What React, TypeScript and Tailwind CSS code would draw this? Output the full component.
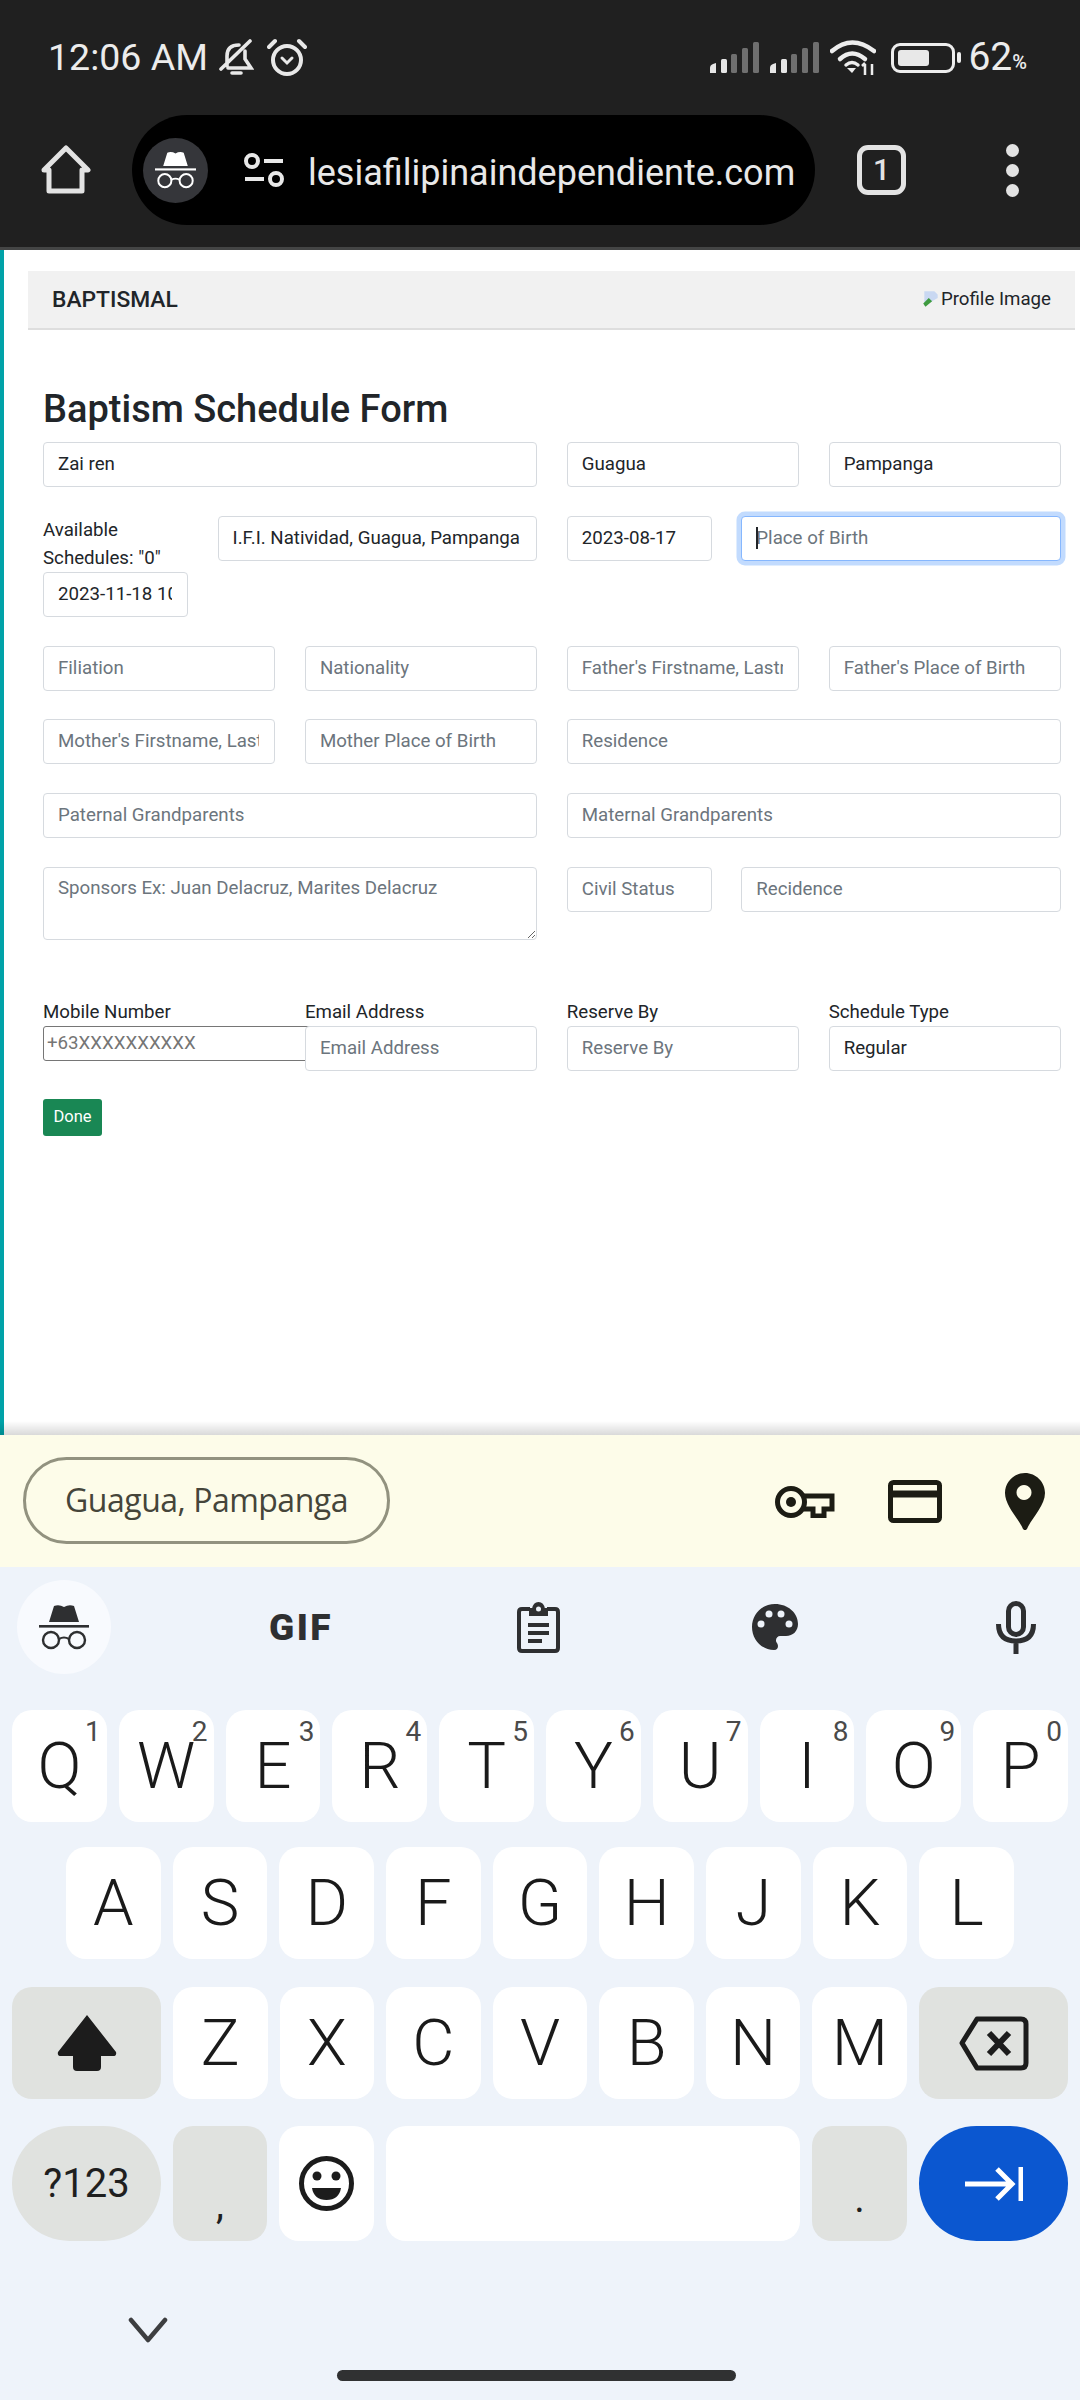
import React from 'react';

const inputBase =
  'w-full h-[45px] rounded-[4px] border border-[#d6dadf] bg-white pl-[14px] pr-[15px] pb-[2px] text-[18.7px] text-[#212529] outline-none placeholder:text-[#6c757d]';

interface FieldProps {
  className: string;
  value?: string;
  placeholder?: string;
}

const Field: React.FC<FieldProps> = ({ className, value, placeholder }) => (
  <div className={className}>
    <input readOnly className={inputBase} defaultValue={value} placeholder={placeholder} />
  </div>
);

const Incognito: React.FC<{ className: string; color: string }> = ({ className, color }) => (
  <svg viewBox="0 0 50 46" className={className} fill="none">
    <path d="M10 18 L15 2 Q20 0 25 3 Q30 0 35 2 L40 18 Z" fill={color} />
    <rect x="0" y="21" width="50" height="2.6" fill={color} />
    <circle cx="12" cy="36" r="8" stroke={color} strokeWidth="2.4" />
    <circle cx="38" cy="36" r="8" stroke={color} strokeWidth="2.4" />
    <path d="M20 35 Q25 32 30 35" stroke={color} strokeWidth="2.2" />
  </svg>
);

const Signal: React.FC = () => (
  <svg viewBox="0 0 49 31" className="w-[49px] h-[31px]">
    <path d="M0 31V26q0-3 3-4l3-1V31z" fill="#e6e6e6" />
    <rect x="11" y="17" width="6" height="14" rx="1.5" fill="#e6e6e6" />
    <rect x="21" y="12" width="6" height="19" rx="1.5" fill="#6f6f6f" />
    <rect x="32" y="6" width="6" height="25" rx="1.5" fill="#6f6f6f" />
    <rect x="43" y="0" width="6" height="31" rx="1.5" fill="#6f6f6f" />
  </svg>
);

const Wifi: React.FC = () => (
  <svg viewBox="0 0 46 36" className="w-[46px] h-[36px] ml-[11px]" fill="none" stroke="#ededed" strokeWidth="4.5" strokeLinecap="round">
    <path d="M2 11 Q22 -6 44 11" />
    <path d="M10 19 Q22 8 35 19" />
    <path d="M16 25 Q22 20 28 25" strokeWidth="3.5" />
    <path d="M17 28 L22 33 L26 28 Z" fill="#ededed" stroke="none" />
    <path d="M35 24 V35 M32 26 L35 23 M42 24 V35" stroke="#ededed" strokeWidth="2.5" strokeLinecap="butt" />
  </svg>
);

const Key: React.FC<{ label: string; hint?: string }> = ({ label, hint }) => (
  <div className="relative flex-1 h-[112px] rounded-[20px] bg-white flex items-center justify-center text-[65px] leading-none font-[350] text-[#1a1a1a]">
    {label}
    {hint && <span className="absolute top-[4px] right-[6px] text-[28px] font-normal leading-[36px] text-[#4a4a4a]">{hint}</span>}
  </div>
);

const App: React.FC = () => {
  return (
    <div className="w-[1080px] h-[2400px] overflow-hidden flex flex-col bg-white font-['Roboto',sans-serif]">
      {/* browser chrome */}
      <div className="h-[250px] shrink-0 bg-[#202020] border-b-[3px] border-[#444545]">
        <div className="h-[115px] flex items-center pl-[48px] pr-[53px] text-[#ececec]">
          <span className="text-[37.5px] leading-none">12:06 AM</span>
          <svg viewBox="0 0 36 38" className="w-[36px] h-[38px] ml-[10px]" fill="none" stroke="#e8e8e8" strokeWidth="3.6" strokeLinecap="round">
            <path d="M9 27 V17 Q9 6 21 6 M27 12 V20 L33 29 H10 M3 30 L32 2" />
            <path d="M14 34 H23" strokeWidth="3.6" />
          </svg>
          <svg viewBox="0 0 40 40" className="w-[40px] h-[40px] ml-[13px]" fill="none" stroke="#e8e8e8" strokeWidth="4" strokeLinecap="round">
            <circle cx="20" cy="22" r="14" />
            <path d="M2 9 L8 3 M38 9 L32 3" />
            <path d="M15 20 L20 25 L25 20" strokeWidth="3" />
          </svg>
          <div className="ml-auto flex items-center">
            <Signal />
            <div className="w-[11px]" />
            <Signal />
            <Wifi />
            <div className="relative ml-[15px] w-[64px] h-[30px] rounded-[9px] border-[3px] border-[#ededed] p-[4px]">
              <div className="w-[31px] h-full rounded-[3px] bg-[#e8e8e8]" />
            </div>
            <div className="w-[4px] h-[11px] rounded-[2px] bg-[#ededed] ml-[2px]" />
            <span className="ml-[7px] text-[39px] leading-none">62</span>
            <span className="text-[20px] font-medium self-end">%</span>
          </div>
        </div>
        <div className="h-[110px] flex items-center">
          <svg viewBox="0 0 50 50" className="w-[50px] h-[50px] ml-[41px] shrink-0" fill="none" stroke="#e3e3e3" strokeWidth="5" strokeLinejoin="round">
            <path d="M25 3 L47 25 H41 V46 H8 V25 H3 Z" />
          </svg>
          <div className="ml-[41px] w-[683px] h-[110px] rounded-full bg-black flex items-center pl-[11px] overflow-hidden">
            <div className="w-[65px] h-[65px] rounded-full bg-[#35363a] flex items-center justify-center shrink-0">
              <Incognito className="w-[41px] h-[38px]" color="#ffffff" />
            </div>
            <svg viewBox="0 0 42 34" className="w-[42px] h-[34px] ml-[35px] shrink-0" fill="none" stroke="#e8e8e8" strokeWidth="4">
              <circle cx="9" cy="8" r="6" />
              <circle cx="33" cy="26" r="6" />
              <path d="M21 8 H40 M2 26 H21" />
            </svg>
            <span className="ml-[23px] mt-[5px] text-[36px] leading-none text-[#e8e8e8] whitespace-nowrap">lesiafilipinaindependiente.com</span>
          </div>
          <div className="ml-[42px] w-[49px] h-[50px] rounded-[11px] border-[5px] border-[#e3e3e3] flex items-center justify-center text-[#e3e3e3] text-[30px] font-medium leading-none">
            1
          </div>
          <div className="ml-[100px] flex flex-col gap-[7px]">
            <div className="w-[13px] h-[13px] rounded-full bg-[#e3e3e3]" />
            <div className="w-[13px] h-[13px] rounded-full bg-[#e3e3e3]" />
            <div className="w-[13px] h-[13px] rounded-full bg-[#e3e3e3]" />
          </div>
        </div>
      </div>

      {/* page */}
      <div className="relative h-[1185px] shrink-0 border-l-[4px] border-[#00a2a8] pt-[21px]">
        <div className="ml-[24px] w-[1047px] h-[59px] bg-[#f1f1f1] border-b-2 border-[#dedede] flex items-center justify-between pl-[24px] pr-[24px]">
          <span className="mt-[2px] text-[22.8px] font-medium text-[#212529]">BAPTISMAL</span>
          <span className="flex items-center text-[18.7px] text-[#212529]">
            <svg viewBox="0 0 18 18" className="w-[20px] h-[20px]">
              <path d="M3 2 H12 L15 5 V8 L3 15 Z" fill="#c9d8f2" />
              <path d="M2 13 L7 8 L10 11 L4 16 Z" fill="#3f9b3f" />
            </svg>
            Profile Image
          </span>
        </div>

        <div className="ml-[39px] w-[1018px]">
          <h2 className="mt-[55px] h-[48px] text-[38px] leading-[48px] font-medium text-[#212529]">Baptism Schedule Form</h2>

          <div className="mt-[9px] grid grid-cols-12 gap-x-[29.5px]">
            <Field className="col-span-6" value="Zai ren" />
            <Field className="col-span-3" value="Guagua" />
            <Field className="col-span-3" value="Pampanga" />
          </div>

          <div className="mt-[29px] grid grid-cols-12 gap-x-[29.5px]">
            <div className="col-span-2">
              <div className="text-[18.7px] leading-[28px] text-[#212529]">Available Schedules: "0"</div>
              <input readOnly className={inputBase} defaultValue="2023-11-18 10:00:00" />
            </div>
            <Field className="col-span-4" value="I.F.I. Natividad, Guagua, Pampanga" />
            <Field className="col-span-2" value="2023-08-17" />
            <div className="col-span-4 relative">
              <input
                readOnly
                className="w-full h-[45px] rounded-[4px] border border-[#86b7fe] bg-white pl-[14px] pr-[15px] pb-[2px] text-[18.7px] outline-none shadow-[0_0_0_4.5px_rgba(13,110,253,0.25)] placeholder:text-[#6c757d]"
                placeholder="Place of Birth"
              />
              <span className="absolute left-[15px] top-[11px] w-[2px] h-[22px] bg-[#212529]" />
            </div>
          </div>

          <div className="mt-[29px] grid grid-cols-12 gap-x-[29.5px]">
            <Field className="col-span-3" placeholder="Filiation" />
            <Field className="col-span-3" placeholder="Nationality" />
            <Field className="col-span-3" placeholder="Father's Firstname, Lastname" />
            <Field className="col-span-3" placeholder="Father's Place of Birth" />
          </div>

          <div className="mt-[28px] grid grid-cols-12 gap-x-[29.5px]">
            <Field className="col-span-3" placeholder="Mother's Firstname, Lastname" />
            <Field className="col-span-3" placeholder="Mother Place of Birth" />
            <Field className="col-span-6" placeholder="Residence" />
          </div>

          <div className="mt-[29px] grid grid-cols-12 gap-x-[29.5px]">
            <Field className="col-span-6" placeholder="Paternal Grandparents" />
            <Field className="col-span-6" placeholder="Maternal Grandparents" />
          </div>

          <div className="mt-[29px] grid grid-cols-12 gap-x-[29.5px]">
            <div className="col-span-6">
              <textarea
                readOnly
                className="block w-full h-[73px] rounded-[4px] border border-[#d6dadf] bg-white px-[14px] py-[7px] text-[18.7px] leading-[27px] outline-none placeholder:text-[#6c757d]"
                placeholder="Sponsors Ex: Juan Delacruz, Marites Delacruz"
              />
            </div>
            <Field className="col-span-2" placeholder="Civil Status" />
            <Field className="col-span-4" placeholder="Recidence" />
          </div>

          <div className="mt-[58px] grid grid-cols-12 gap-x-[29.5px] text-[18.7px] leading-[28px] text-[#212529]">
            <div className="col-span-3">
              <div>Mobile Number</div>
              <input
                readOnly
                className="block w-[275px] h-[35px] rounded-[3px] border border-[#767676] bg-white px-[3px] pb-[2px] text-[18.7px] outline-none placeholder:text-[#757575]"
                placeholder="+63XXXXXXXXXX"
              />
            </div>
            <div className="col-span-3 relative">
              <div>Email Address</div>
              <input readOnly className={inputBase} placeholder="Email Address" />
            </div>
            <div className="col-span-3">
              <div>Reserve By</div>
              <input readOnly className={inputBase} placeholder="Reserve By" />
            </div>
            <div className="col-span-3">
              <div>Schedule Type</div>
              <input readOnly className={inputBase} defaultValue="Regular" />
            </div>
          </div>

          <button className="mt-[28px] block w-[59px] h-[37px] rounded-[3px] bg-[#198754] text-[16.5px] text-white">Done</button>
        </div>
        <div className="absolute left-[-4px] right-0 bottom-0 h-[14px] bg-gradient-to-b from-transparent to-black/15" />
      </div>

      {/* autofill suggestion bar */}
      <div className="h-[132px] shrink-0 bg-[#fdfce9] flex items-center pl-[23px]">
        <div className="w-[367px] h-[87px] mb-[2px] rounded-full border-[3px] border-[#92927f] flex items-center justify-center text-[32px] text-[#45453a] font-['Open_Sans',sans-serif] tracking-[-0.5px]">
          Guagua, Pampanga
        </div>
        <svg viewBox="0 0 60 33" className="w-[60px] h-[33px] ml-[385px]" fill="none" stroke="#1c1c14" strokeWidth="5">
          <circle cx="16" cy="17" r="13.5" />
          <circle cx="16" cy="17" r="5" fill="#1c1c14" stroke="none" />
          <path d="M29 11 H57 V24 H49 V31 H38 V24 H29" />
        </svg>
        <svg viewBox="0 0 54 43" className="w-[54px] h-[43px] ml-[53px]" fill="none" stroke="#1c1c14" strokeWidth="5">
          <rect x="2.5" y="2.5" width="49" height="38" rx="3" />
          <path d="M2 14 H52" strokeWidth="7" />
        </svg>
        <svg viewBox="0 0 40 57" className="w-[40px] h-[57px] ml-[63px]">
          <path
            fillRule="evenodd"
            fill="#1c1c14"
            d="M20 0C9 0 0 9 0 20c0 13 14 26 18 36 1 1.500 3 1.500 4 0 4-10 18-23 18-36C40 9 31 0 20 0z M19 12a7.500 7.500 0 1 0 .01 0z"
          />
        </svg>
      </div>

      {/* keyboard */}
      <div className="flex-1 bg-[#eef3fa] px-[12px] pt-[13px]">
        <div className="flex justify-between px-[5px] text-[#2e2f31]">
          <div className="w-[94px] h-[94px] rounded-full bg-[#f8fafe] flex items-center justify-center">
            <Incognito className="w-[50px] h-[46px]" color="#2e2f31" />
          </div>
          <div className="w-[94px] h-[94px] flex items-center justify-center">
            <span className="mr-[2px] text-[37px] leading-none font-black tracking-[2.5px]">GIF</span>
          </div>
          <div className="w-[94px] h-[94px] flex items-center justify-center">
            <svg viewBox="0 0 43 51" className="w-[43px] h-[51px] mr-[4px]" fill="none" stroke="#2e2f31" strokeWidth="4">
              <path d="M13 7 H5 Q2 7 2 10 V46 Q2 49 5 49 H38 Q41 49 41 46 V10 Q41 7 38 7 H30" />
              <path d="M13 13 V7 H16 Q17 1 21.500 1 Q26 1 27 7 H30 V13 Z" fill="#2e2f31" strokeWidth="2" />
              <circle cx="21.500" cy="7" r="2.500" fill="#eef3fa" stroke="none" />
              <path d="M11 23 H32 M11 31 H32 M11 39 H25" />
            </svg>
          </div>
          <div className="w-[94px] h-[94px] flex items-center justify-center">
            <svg viewBox="0 0 46 46" className="w-[46px] h-[46px] mr-[6px]">
              <path
                fill="#2e2f31"
                d="M23 0C10 0 0 10 0 23s10 23 22 23c3 0 4-2 4-4 0-1-.500-2-1-3-1-1-1-2-1-3 0-2 2-4 4-4h6c7 0 12-5 12-12C46 9 36 0 23 0z"
              />
              <circle cx="9" cy="20" r="3.500" fill="#eef3fa" />
              <circle cx="17" cy="10" r="3.500" fill="#eef3fa" />
              <circle cx="29" cy="10" r="3.500" fill="#eef3fa" />
              <circle cx="37" cy="20" r="3.500" fill="#eef3fa" />
            </svg>
          </div>
          <div className="w-[94px] h-[94px] flex items-center justify-center">
            <svg viewBox="0 0 40 53" className="w-[40px] h-[53px]" fill="none" stroke="#2e2f31" strokeWidth="5">
              <rect x="12.500" y="2.500" width="15" height="31" rx="7.500" />
              <path d="M2.500 23 Q2.500 40 20 40 Q37.500 40 37.500 23 M20 40 V53" />
            </svg>
          </div>
        </div>

        <div className="mt-[36px] flex gap-[12px]">
          {[['Q', '1'], ['W', '2'], ['E', '3'], ['R', '4'], ['T', '5'], ['Y', '6'], ['U', '7'], ['I', '8'], ['O', '9'], ['P', '0']].map(([l, h]) => (
            <Key key={l} label={l} hint={h} />
          ))}
        </div>
        <div className="mt-[25px] px-[54px] flex gap-[12px]">
          {['A', 'S', 'D', 'F', 'G', 'H', 'J', 'K', 'L'].map((l) => (
            <Key key={l} label={l} />
          ))}
        </div>
        <div className="mt-[28px] flex gap-[12px]">
          <div className="w-[149px] h-[112px] rounded-[20px] bg-[#e0e2df] flex items-center justify-center shrink-0">
            <svg viewBox="0 0 60 56" className="w-[60px] h-[56px]">
              <path fill="#1c1c1c" d="M30 0 L59 37 Q60 41 56 41 H44 V52 Q44 56 40 56 H20 Q16 56 16 52 V41 H4 Q0 41 1 37 Z" />
            </svg>
          </div>
          {['Z', 'X', 'C', 'V', 'B', 'N', 'M'].map((l) => (
            <Key key={l} label={l} />
          ))}
          <div className="w-[149px] h-[112px] rounded-[20px] bg-[#e0e2df] flex items-center justify-center shrink-0">
            <svg viewBox="0 0 70 55" className="w-[70px] h-[55px]" fill="none" stroke="#1c1c1c" strokeWidth="5" strokeLinejoin="round">
              <path d="M18 3 H62 Q67 3 67 8 V47 Q67 52 62 52 H18 L3 27 Z" />
              <path d="M30 17 L50 38 M50 17 L30 38" strokeWidth="6" />
            </svg>
          </div>
        </div>
        <div className="mt-[27px] flex gap-[12px] h-[115px]">
          <div className="w-[149px] rounded-full bg-[#e0e2df] flex items-center justify-center text-[40px] text-[#1f1f1f] shrink-0">?123</div>
          <div className="w-[94px] rounded-[20px] bg-[#e0e2df] flex items-end justify-center pb-[16px] text-[40px] leading-none text-[#1f1f1f] shrink-0">,</div>
          <div className="w-[95px] rounded-[20px] bg-white flex items-center justify-center shrink-0">
            <svg viewBox="0 0 55 55" className="w-[55px] h-[55px]" fill="none">
              <circle cx="27.500" cy="27.500" r="25" stroke="#1c1c1c" strokeWidth="5" />
              <circle cx="18" cy="20" r="4.500" fill="#1c1c1c" />
              <circle cx="37" cy="20" r="4.500" fill="#1c1c1c" />
              <path d="M13 32 H42 Q40 44 27.500 44 Q15 44 13 32 Z" fill="#1c1c1c" />
            </svg>
          </div>
          <div className="flex-1 rounded-[20px] bg-white" />
          <div className="w-[95px] rounded-[20px] bg-[#e0e2df] flex items-end justify-center pb-[22px] text-[40px] leading-none text-[#1f1f1f] shrink-0">.</div>
          <div className="w-[149px] rounded-full bg-[#0b57d0] flex items-center justify-center shrink-0">
            <svg viewBox="0 0 58 34" className="w-[58px] h-[34px]" fill="none" stroke="#ffffff" strokeWidth="5">
              <path d="M0 17 H47 M32 2 L47 17 L32 32" />
              <path d="M56 0 V34" />
            </svg>
          </div>
        </div>

        <svg viewBox="0 0 40 26" className="mt-[76px] ml-[116px] w-[40px] h-[26px]" fill="none" stroke="#3d3e40" strokeWidth="4.500" strokeLinecap="round" strokeLinejoin="round">
          <path d="M3 3 L20 23 L37 3" />
        </svg>
        <div className="mt-[27px] ml-[325px] w-[399px] h-[11px] rounded-full bg-[#303132]" />
      </div>
    </div>
  );
};

export default App;
